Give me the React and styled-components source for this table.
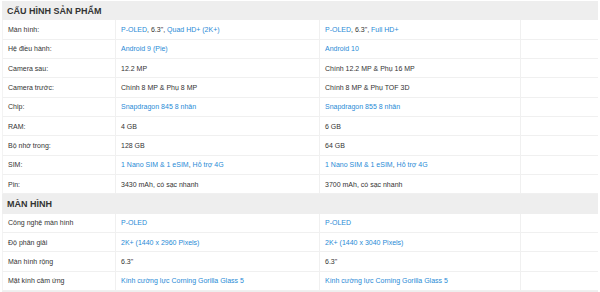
import React from "react";
import styled, { createGlobalStyle } from "styled-components";

const GlobalStyle = createGlobalStyle`
  body {
    margin: 0;
    background: #fff;
    font-family: "Liberation Sans", Arial, sans-serif;
  }
`;

const specs = [
  {
    title: "CẤU HÌNH SẢN PHẨM",
    rows: [
      {
        label: "Màn hình:",
        a: [{ t: "P-OLED", link: true }, { t: ", 6.3\", " }, { t: "Quad HD+ (2K+)", link: true }],
        b: [{ t: "P-OLED", link: true }, { t: ", 6.3\", " }, { t: "Full HD+", link: true }],
      },
      {
        label: "Hệ điều hành:",
        a: [{ t: "Android 9 (Pie)", link: true }],
        b: [{ t: "Android 10", link: true }],
      },
      { label: "Camera sau:", a: [{ t: "12.2 MP" }], b: [{ t: "Chính 12.2 MP & Phụ 16 MP" }] },
      { label: "Camera trước:", a: [{ t: "Chính 8 MP & Phụ 8 MP" }], b: [{ t: "Chính 8 MP & Phụ TOF 3D" }] },
      {
        label: "Chip:",
        a: [{ t: "Snapdragon 845 8 nhân", link: true }],
        b: [{ t: "Snapdragon 855 8 nhân", link: true }],
      },
      { label: "RAM:", a: [{ t: "4 GB" }], b: [{ t: "6 GB" }] },
      { label: "Bộ nhớ trong:", a: [{ t: "128 GB" }], b: [{ t: "64 GB" }] },
      {
        label: "SIM:",
        a: [{ t: "1 Nano SIM & 1 eSIM", link: true }, { t: ", " }, { t: "Hỗ trợ 4G", link: true }],
        b: [{ t: "1 Nano SIM & 1 eSIM", link: true }, { t: ", " }, { t: "Hỗ trợ 4G", link: true }],
      },
      { label: "Pin:", a: [{ t: "3430 mAh, có sạc nhanh" }], b: [{ t: "3700 mAh, có sạc nhanh" }] },
    ],
  },
  {
    title: "MÀN HÌNH",
    rows: [
      { label: "Công nghệ màn hình", a: [{ t: "P-OLED", link: true }], b: [{ t: "P-OLED", link: true }] },
      {
        label: "Độ phân giải",
        a: [{ t: "2K+ (1440 x 2960 Pixels)", link: true }],
        b: [{ t: "2K+ (1440 x 3040 Pixels)", link: true }],
      },
      { label: "Màn hình rộng", a: [{ t: "6.3\"" }], b: [{ t: "6.3\"" }] },
      {
        label: "Mặt kính cảm ứng",
        a: [{ t: "Kính cường lực Corning Gorilla Glass 5", link: true }],
        b: [{ t: "Kính cường lực Corning Gorilla Glass 5", link: true }],
      },
    ],
  },
];

function Value({ parts }) {
  return (
    <Cell>
      <Text>
        {parts.map((p, i) =>
          p.link ? <Link key={i}>{p.t}</Link> : <span key={i}>{p.t}</span>
        )}
      </Text>
    </Cell>
  );
}

export default function App() {
  return (
    <>
      <GlobalStyle />
      <Page>
        <Table>
          {specs.map((group) => (
            <React.Fragment key={group.title}>
              <GroupHead>{group.title}</GroupHead>
              {group.rows.map((r) => (
                <Row key={r.label}>
                  <Cell>
                    <Text>{r.label}</Text>
                  </Cell>
                  <Value parts={r.a} />
                  <Value parts={r.b} />
                  <Cell />
                </Row>
              ))}
            </React.Fragment>
          ))}
          <GroupHead />
        </Table>
      </Page>
    </>
  );
}

const Page = styled.div`
  padding: 1px 0 0 2px;
  width: 596px;
  height: 291px;
  overflow: hidden;
`;

const Table = styled.div`
  display: flex;
  flex-direction: column;
  width: 596px;
  border-right: 1px solid #f1f1f1;
`;

const GroupHead = styled.div`
  height: 19.33px;
  flex-shrink: 0;
  box-sizing: border-box;
  display: flex;
  align-items: center;
  padding-left: 5px;
  background: #eeeeee;
  color: #333;
  font-size: 9px;
  font-weight: bold;
`;

const Row = styled.div`
  display: grid;
  grid-template-columns: 113px 204px 201px 1fr;
  height: 19.33px;
  flex-shrink: 0;
  box-sizing: border-box;
  border-bottom: 1px solid #f0f0f0;
  border-left: 1px solid #f3f3f3;
`;

const Cell = styled.div`
  display: flex;
  align-items: center;
  padding-left: 5px;
  white-space: nowrap;
  font-size: 7px;
  color: #333;
  border-right: 1px solid #f0f0f0;

  &:last-child {
    border-right: none;
  }
`;

const Text = styled.span`
  white-space: pre;
`;

const Link = styled.span`
  color: #288ad6;
`;
